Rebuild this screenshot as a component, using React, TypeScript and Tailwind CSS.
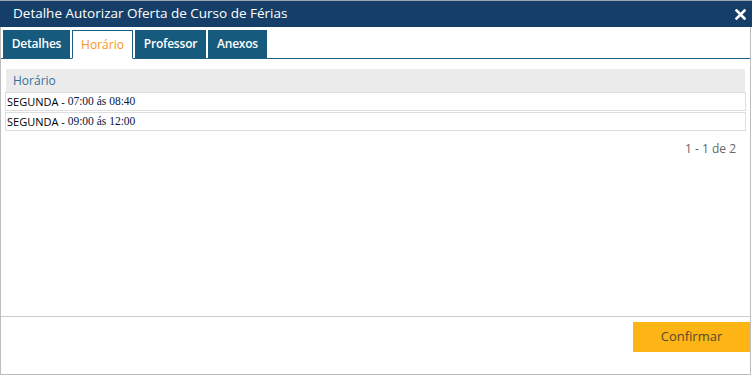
import React from "react";

const font = { fontFamily: '"Open Sans", "Noto Sans", sans-serif' };

function Tab({ label, w, active }: { label: string; w: string; active?: boolean }) {
  if (active) {
    return (
      <div className={`${w} h-[29px] -mb-px flex items-center justify-center bg-white border border-[#1b5f86] border-b-white text-[#f7941d] text-[12px]`}>
        {label}
      </div>
    );
  }
  return (
    <div className={`${w} h-[28px] flex items-center justify-center bg-[#165a7e] text-white text-[12px] font-semibold tracking-[-0.2px]`}>
      {label}
    </div>
  );
}

export default function App() {
  return (
    <div className="w-[752px] h-[376px] bg-white relative overflow-hidden" style={font}>
      <div className="h-[27px] bg-[#153f69] border-t border-[#9aa5b1] flex items-center justify-between pl-[13px] pr-[6px]">
        <span className="text-white text-[13.5px] leading-none">Detalhe Autorizar Oferta de Curso de Férias</span>
        <svg width="11" height="11" viewBox="0 0 11 11">
          <path d="M1.5 1.5 L9.5 9.5 M9.5 1.5 L1.5 9.5" stroke="white" strokeWidth="2.6" strokeLinecap="square" />
        </svg>
      </div>
      <div className="h-[348px] w-[751px] border-l border-r border-b border-[#bdbdbd] flex flex-col">
        <div className="pt-[3px] pl-[2px] flex items-end gap-[2px] border-b border-[#1b5f86] h-[32px]">
          <Tab label="Detalhes" w="w-[67px]" />
          <Tab label="Horário" w="w-[61px]" active />
          <Tab label="Professor" w="w-[71px]" />
          <Tab label="Anexos" w="w-[59px]" />
        </div>
        <div className="flex-1 flex flex-col">
          <div className="pt-[10px] pl-[4px] pr-[4px]">
            <div className="ml-[1px] mr-[1px] h-[23px] bg-[#ebebeb] flex items-center pl-[7px] text-[12px] text-[#36709a]">
              Horário
            </div>
            <div className="h-[19px] border border-[#dedede] flex items-center pl-[1px] text-[11px] text-black leading-none">
              <span>SEGUNDA -&nbsp;</span>
              <span className="text-[#06163f]" style={{ fontFamily: '"Liberation Serif", serif', fontSize: "11.5px" }}>07:00 ás 08:40</span>
            </div>
            <div className="h-[19px] mt-px border border-[#dedede] flex items-center pl-[1px] text-[11px] text-black leading-none">
              <span>SEGUNDA -&nbsp;</span>
              <span className="text-[#06163f]" style={{ fontFamily: '"Liberation Serif", serif', fontSize: "11.5px" }}>09:00 ás 12:00</span>
            </div>
            <div className="flex justify-end pr-[10px] pt-[9px] text-[12px] text-[#666]">1 - 1 de 2</div>
          </div>
          <div className="flex-1" />
          <div className="h-[58px] border-t border-[#cccccc] flex justify-end pt-[5px]">
            <button className="w-[117px] h-[30px] bg-[#fdb515] text-[13px] text-[#54492f]">Confirmar</button>
          </div>
        </div>
      </div>
    </div>
  );
}
